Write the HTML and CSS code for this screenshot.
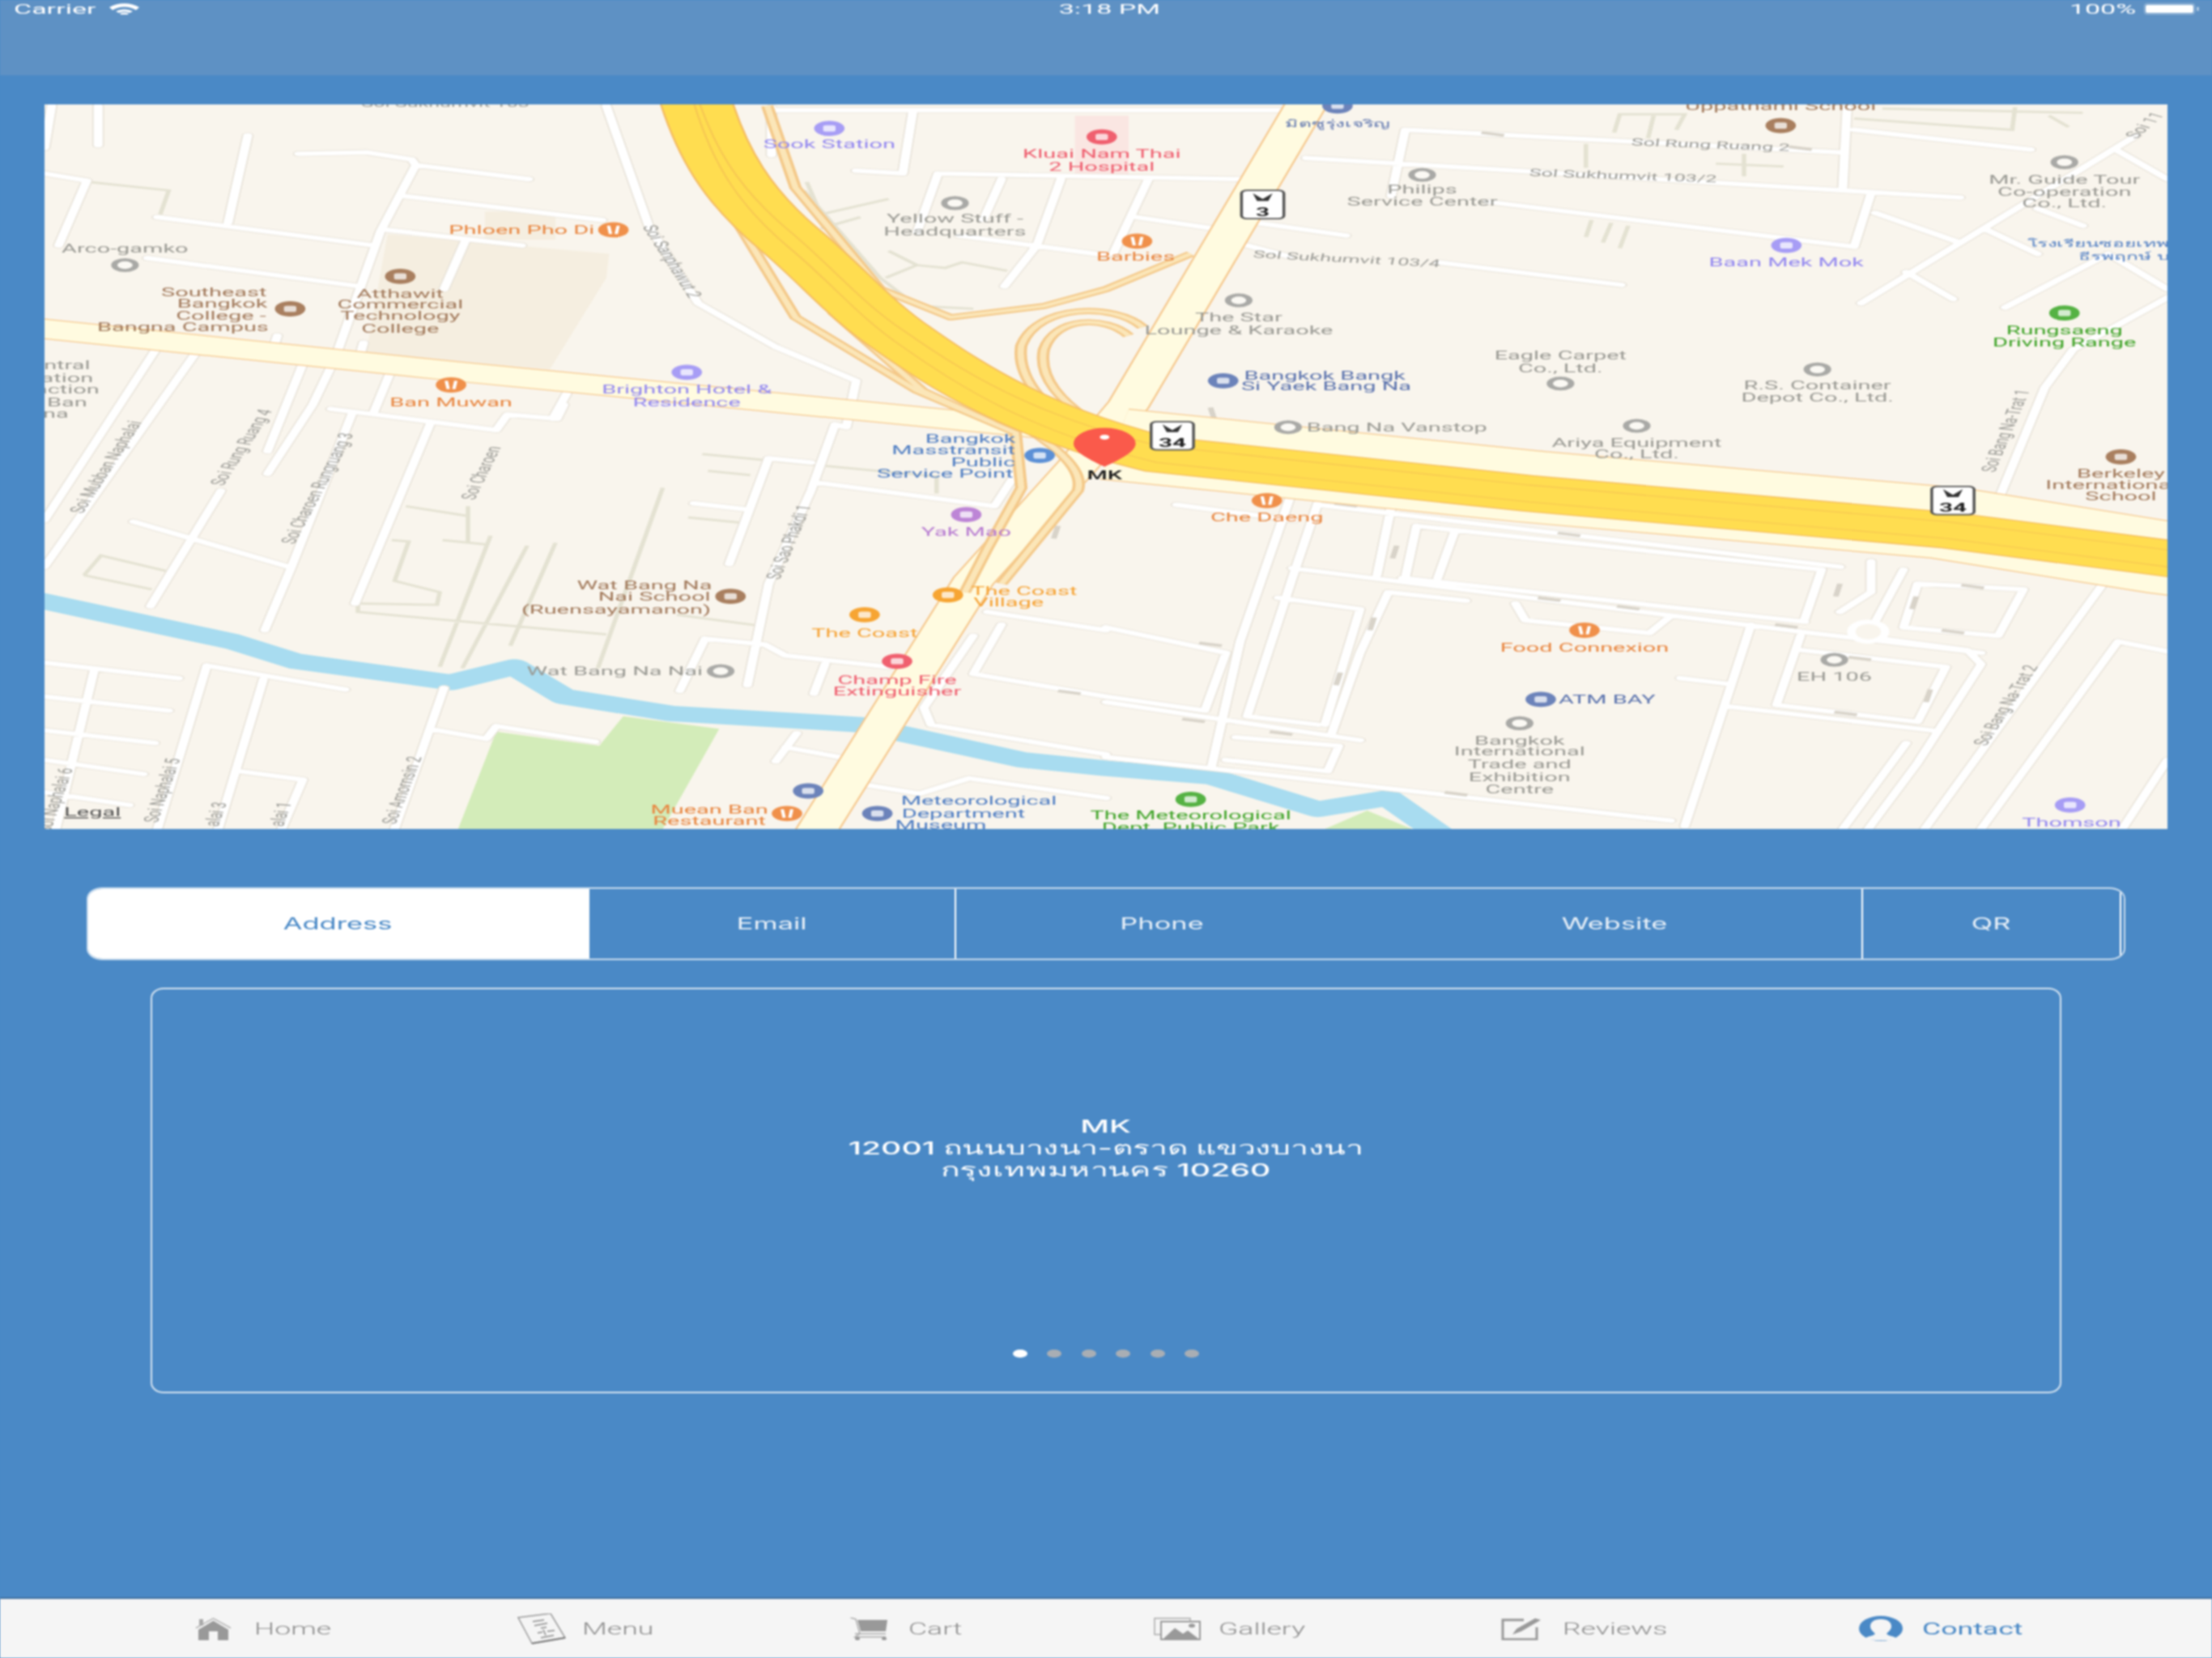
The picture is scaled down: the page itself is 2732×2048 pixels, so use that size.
FILE: index.html
```html
<!DOCTYPE html>
<html lang="en">
<head>
<meta charset="utf-8">
<title>Contact</title>
<link rel="stylesheet" href="styles.css">
</head>
<body>
<div class="screen">
  <header class="topbar">
    <div class="status-left">
      <span class="status-text origin-left">Carrier</span>
      <svg class="wifi" viewBox="0 0 37 14" preserveAspectRatio="none"><path d="M0 5C10-1.500 27-1.500 37 5L33 8.500C24 3 13 3 4 8.500Z" fill="#fff"/><path d="M8 10C14 6.500 23 6.500 29 10L25 12C21 10 16 10 12 12Z" fill="#fff"/><ellipse cx="18.500" cy="13" rx="5" ry="1.500" fill="#fff"/></svg>
    </div>
    <div class="status-center"><span class="status-text">3:18 PM</span></div>
    <div class="status-right">
      <span class="status-text origin-right">100%</span>
      <svg class="battery" viewBox="0 0 68 14" preserveAspectRatio="none"><rect x="0.500" y="0.500" width="62" height="13" rx="3" fill="none" stroke="#fff" stroke-opacity=".45"/><rect x="2" y="2" width="59" height="10" rx="2" fill="#fff"/><rect x="65" y="4.500" width="3" height="5" rx="1" fill="#fff" fill-opacity=".5"/></svg>
    </div>
  </header>

  <main class="content">
    <svg class="map" viewBox="16 74 752 514" preserveAspectRatio="none">
      <defs>
        <g id="fork"><circle r="5.400"/><path d="M-1.700-3L-1 3M1.700-3L1 3" stroke="#fff" stroke-width="1.200"/></g>
        <g id="glyph"><circle r="5.400"/><rect x="-2.200" y="-2.200" width="4.400" height="4.400" rx="1" fill="#fff" fill-opacity=".75"/></g>
        <g id="ring"><circle r="3.800" fill="#fbf9f4" stroke="#a9a9a6" stroke-width="2.200"/></g>
        <g id="shield"><rect x="-7.500" y="-10" width="15" height="20" rx="2" fill="#fff" stroke="#555" stroke-width="1"/><path d="M-3.500-8L0-4 3.500-8 2-2.500H-2Z" fill="#333"/></g>
        <path id="roads" d="M18.500 75L16 105M35 75V103M88 96L81 158M106 109L130 108L146 113L147.500 117L187.500 127M147.500 117L135 164L120 248L117.500 260L111 287L95 336M143.500 139L213.500 156M137.500 163L185 174M165 171L157.500 205M56 154L132.500 174M16 123L31 128L21 174M52.500 183L127.500 203M215 75L230 160L247.500 215L275 246L303.500 270L300 303L296 301L287.500 348L272.500 414L265 486M273.500 78H460M273.500 76V110M323.500 80L320 123L303.500 121M332.500 123L440.500 127M332.500 123L325 165M355 127L348.500 156M376 127L367.500 174L356 203M340 167L392 181M403 154L430 162M445.500 158L477 167M407 127L394.500 180M498 92L652 108M498 92L493 139M463 112L694.500 140M527 143L657 175L663 137M654.500 76L653 133M657 92L719.500 106M442 174L457 182M509.500 186L574.500 202M757 96L659.500 215M750.500 107L768 127M722 148L738 160M703 162L722 180M675.500 193L692 212M664.500 151L693 171M747 180L710.500 218M747 180L768 205M768 211L734.500 248L724.500 275L708 355M417 358L458.500 369M458 348L439.500 455L429.500 543M467 357L458 410L442 508L467 514M467 358L652 402M502 373L645.500 404L639.500 439M502 373L498 410M515.500 377L509.500 410M458 403L642 449L702 463M497 410L639.500 441M493.500 355L488 408M492 420L482 463L472 520M453 424L482 432L469.500 514M492 420L519.500 426M537 428L540.500 440L584.500 449L592 437M620.500 443L597 586M638 451L629.500 500L679.500 512L689.500 473L638 461M679.500 414L717 418L708 451L674.500 445ZM663 398L663 420L652 434M674.500 404L664.500 441M667 453L697 461L702 471L679.500 541L662 588M612 501L684.500 518M595.500 481L612 485M675.500 527L653 588M744.500 416L682 588M750.500 455L702 588M750.500 455L768 462M768 539L752 588M392 445L434.500 463L427 504L392 494M392 498L482 525M392 537L429.500 545L592 582M438 523L474.500 529L470.500 547L434.500 539M350 434L392 447M355 443L345 478L392 494M327.500 502L330 514L392 535M345 451L327.500 502M272.500 325L258.500 400M272.500 325L287.500 328M288.500 342L352.500 359L360 336M246 357L263.500 361M117.500 290L176 305L180 294L197.500 297L200 287M152.500 301L126 428M125 293L103.500 402L94 447M78.500 348L53.500 430M47.500 370L102.500 402M56 246L16 369M70 249L16 402M107.500 258L95 320M98.500 238L97.500 244M129 243L128 250M138.500 264L132.500 293M201 279L196 297M250 453L271 457L278.500 465L315 473M250 453L241 490M292.500 471L288.500 492M16 470L63.500 481M33.500 476L20 588M16 494L60 504M16 518L55 527M16 539L51 549M16 562L46 571M73.500 472L122.500 489M73.500 472L56 588M93.500 482L77.500 588M85 547L107.500 553L100 588M157.500 488L140 588M152.500 517L172.500 524L176 515L211 526M282.500 520L275 540M278.500 530L297.500 537M305 556L326 563L343.500 552L392 566"/>
        <path id="highway" d="M245 60C252 110 262 140 280 170C295 195 305 220 320 240C340 268 365 300 410 322L542 350L690 376L768 396L800 404"/>
        <path id="ramps" d="M272 75L282 133L312 205L337 225L370 217L392 205L422 180M257 143L282 225L325 277L360 307L362 346L350 389L342 420M295 221L327 277L352 300M350 287C370 310 385 330 382 348L355 414M405 232C395 215 368 215 362 245C360 270 372 290 382 305M400 238C392 224 374 224 370 248C368 268 376 285 388 300"/>
      </defs>

      <rect class="land" x="16" y="74" width="752" height="514"/>
      <path class="campus" d="M137.500 166L216 180L215 197L195 262L130 250Z"/>
      <rect class="campus" x="172" y="150" width="25" height="20"/>
      <rect class="hospital" x="381" y="82" width="19" height="43"/>
      <path class="park" d="M221 508L255 517L235 588H162.500L176 519L212.500 529Z"/>
      <path class="park" d="M469.500 588L484.500 575L500.500 588Z"/>
      <path class="water" d="M10 424L82.500 455L105 469L160 484L182.500 473L200 494L237.500 506L305 514L362.500 539L392 545L429.500 551L467 574L492 566L512 594"/>

      <path class="minor" d="M144 359L166 366M157 383L172 386M174 380L156 473M187 387L164 474M197 385L181 458M235 346L212 474M127 428L127 434L215 450M126 428L155 429L156 420L140 412L145 384L139 383M249 322L332 338L332 350M251 334L266 337M244 367L264 371M240 436L270 444M30 408L36 394L59 405M30 408L54 418M166 359V385M286 129L291 152L315 141M291 162L305 154M314 197L325 188L315 178M325 188L335 190L341 186L357 192M285 135L312 197L325 217L345 219M32 129L60 135L57 152M572 94L574 81L597 81L594 92M586 82L584 98M657 84L713 92L714 76M667 77L738 80M726 82L733 90M562 102V119M608 116L632 118M618 109V125M564 156L562 168M571 158L568 172M577 160L574 176"/>
      <use href="#roads" class="road-case"/>
      <use href="#roads" class="road-fill"/>
      <ellipse class="road-loop" cx="662" cy="448" rx="6" ry="7"/>
      <path class="arrow" d="M552 378l8 2M473 357l8 2M695 415l8 2M545 424l8 2M573 430l8 2M629 443l8 2M425 456l8 2M688 447l8 2M655 466l8 2M650 505l8 2M419 510l8 2M450 519l8 2M512 562l8 2M210 270l8 2M300 296l8 2M375 490l8 2M525 94l8 2M634 104l8 2M495 387l-1.500 9M652 414l-1.500 9M679 423l-1.500 9M487 438l-1.500 9M475 477l-1.500 9M684 489l-1.500 9M375 373l-1.500 9M429 289l1.500 9"/>

      <path class="art-edge w14" d="M10 232L160 263L375 305"/>
      <path class="art-fill w13" d="M10 232L160 263L375 305"/>
      <path class="art-edge w15" d="M467 60L400 287L382 330L345 412L288 594"/>
      <path class="art-fill w14n" d="M467 60L400 287L382 330L345 412L288 594"/>
      <path class="art-edge w51" d="M395 315L542 345L690 371L768 396L800 404"/>
      <path class="art-fill w50" d="M395 315L542 345L690 371L768 396L800 404"/>
      <use href="#ramps" class="ramp-edge"/>
      <use href="#ramps" class="ramp-fill"/>
      <use href="#highway" class="hw-edge"/>
      <use href="#highway" class="hw-fill"/>
      <use href="#highway" class="hw-line" y="-6"/>
      <use href="#highway" class="hw-line" y="6"/>

      <g class="streets">
        <text x="158" y="76">Sol Sukhumvit 103</text>
        <text transform="translate(236 186) rotate(72)">Soi Sanphawut 2</text>
        <text transform="translate(606 105) rotate(4)">Sol Rung Ruang 2</text>
        <text transform="translate(575 127) rotate(4)">Sol Sukhumvit 103/2</text>
        <text transform="translate(477 186) rotate(6)">Sol Sukhumvit 103/4</text>
        <text transform="translate(40 332) rotate(-72)">Soi Mubban Naphalai</text>
        <text transform="translate(88 318) rotate(-72)">Soi Rung Ruang 4</text>
        <text transform="translate(115 347) rotate(-75)">Soi Charoen Rungruang 3</text>
        <text transform="translate(173 336) rotate(-76)">Soi Charoen</text>
        <text transform="translate(282 385) rotate(-78)">Soi Sao Phakdi 1</text>
        <text transform="translate(22 568) rotate(-80)">Soi Naphalai 6</text>
        <text transform="translate(60 561) rotate(-80)">Soi Naphalai 5</text>
        <text transform="translate(79 578) rotate(-80)">alai 3</text>
        <text transform="translate(102 578) rotate(-80)">alai 1</text>
        <text transform="translate(145 561) rotate(-79)">Soi Amornsin 2</text>
        <text transform="translate(713 306) rotate(-78)">Soi Bang Na-Trat 1</text>
        <text transform="translate(713 501) rotate(-72)">Soi Bang Na-Trat 2</text>
        <text transform="translate(762 90) rotate(-60)">Soi 11</text>
      </g>

      <use href="#glyph" x="294" y="91" class="c-purple"/>
      <use href="#glyph" x="390.500" y="97" class="c-red"/>
      <use href="#glyph" x="474" y="75" class="c-navy"/>
      <use href="#glyph" x="631" y="89" class="c-brown"/>
      <use href="#ring" x="504" y="124"/>
      <use href="#ring" x="731.500" y="115"/>
      <use href="#ring" x="338.500" y="144"/>
      <use href="#fork" x="217.500" y="163" class="c-orange"/>
      <use href="#fork" x="403" y="171" class="c-orange"/>
      <use href="#glyph" x="633" y="174" class="c-purple"/>
      <use href="#ring" x="44.500" y="188"/>
      <use href="#glyph" x="103" y="219" class="c-brown"/>
      <use href="#glyph" x="142" y="196" class="c-brown"/>
      <use href="#ring" x="439" y="213"/>
      <use href="#glyph" x="731.500" y="222" class="c-green"/>
      <use href="#ring" x="553" y="272"/>
      <use href="#glyph" x="433.500" y="270" class="c-navy"/>
      <use href="#ring" x="644" y="262"/>
      <use href="#glyph" x="243.500" y="264" class="c-purple"/>
      <use href="#fork" x="160" y="273" class="c-orange"/>
      <use href="#ring" x="456.500" y="303"/>
      <use href="#ring" x="580" y="302"/>
      <use href="#glyph" x="368.500" y="323" class="c-blue"/>
      <use href="#glyph" x="751.500" y="324" class="c-brown"/>
      <use href="#fork" x="449" y="355" class="c-orange"/>
      <use href="#glyph" x="342.500" y="365" class="c-lilac"/>
      <use href="#glyph" x="336" y="422" class="c-amber"/>
      <use href="#glyph" x="259" y="423" class="c-brown"/>
      <use href="#glyph" x="306.500" y="436" class="c-amber"/>
      <use href="#fork" x="561.500" y="447" class="c-orange"/>
      <use href="#ring" x="255.500" y="476"/>
      <use href="#glyph" x="318" y="469" class="c-red"/>
      <use href="#ring" x="650" y="468"/>
      <use href="#glyph" x="546" y="496" class="c-navy"/>
      <use href="#ring" x="538.500" y="513"/>
      <use href="#glyph" x="311" y="577" class="c-navy"/>
      <use href="#fork" x="279" y="577" class="c-orange"/>
      <use href="#glyph" x="286.500" y="561" class="c-navy"/>
      <use href="#glyph" x="422" y="567" class="c-green"/>
      <use href="#glyph" x="733.500" y="571" class="c-purple"/>

      <g class="labels">
        <text class="t-purple" x="294" y="105">Sook Station</text>
        <text class="t-red" x="390.500" y="112">Kluai Nam Thai</text>
        <text class="t-red" x="390.500" y="121">2 Hospital</text>
        <text class="t-navy t-thai" x="474" y="90">มิตซูรุ่งเจริญ</text>
        <text class="t-brown" x="631" y="78">Uppathami School</text>
        <text class="t-gray" x="504" y="137">Philips</text>
        <text class="t-gray" x="504" y="146">Service Center</text>
        <text class="t-gray" x="731.500" y="130">Mr. Guide Tour</text>
        <text class="t-gray" x="731.500" y="139">Co-operation</text>
        <text class="t-gray" x="731.500" y="147">Co., Ltd.</text>
        <text class="t-gray" x="338.500" y="158">Yellow Stuff -</text>
        <text class="t-gray" x="338.500" y="167">Headquarters</text>
        <text class="t-orange" x="185" y="166">Phloen Pho Di</text>
        <text class="t-orange" x="402.500" y="185">Barbies</text>
        <text class="t-purple" x="633" y="189">Baan Mek Mok</text>
        <text class="t-blue t-thai" x="743.500" y="175">โรงเรียนซอยเทพ</text>
        <text class="t-blue t-thai" x="752.500" y="184">ธีรพฤกษ์ บ</text>
        <text class="t-gray" x="44.500" y="179">Arco-gamko</text>
        <text class="t-brown" x="76" y="210">Southeast</text>
        <text class="t-brown" x="79" y="218">Bangkok</text>
        <text class="t-brown" x="78.500" y="227">College -</text>
        <text class="t-brown" x="65" y="235">Bangna Campus</text>
        <text class="t-brown" x="142" y="211">Atthawit</text>
        <text class="t-brown" x="142" y="219">Commercial</text>
        <text class="t-brown" x="142" y="227">Technology</text>
        <text class="t-brown" x="142" y="236">College</text>
        <text class="t-gray" x="439" y="228">The Star</text>
        <text class="t-gray" x="439" y="237">Lounge &amp; Karaoke</text>
        <text class="t-green" x="731.500" y="237">Rungsaeng</text>
        <text class="t-green" x="731.500" y="246">Driving Range</text>
        <text class="t-gray" x="553" y="255">Eagle Carpet</text>
        <text class="t-gray" x="553" y="264">Co., Ltd.</text>
        <text class="t-navy" x="469.500" y="269">Bangkok Bangk</text>
        <text class="t-navy" x="470" y="277">Si Yaek Bang Na</text>
        <text class="t-gray" x="644" y="276">R.S. Container</text>
        <text class="t-gray" x="644" y="285">Depot Co., Ltd.</text>
        <text class="t-purple" x="243.500" y="279">Brighton Hotel &amp;</text>
        <text class="t-purple" x="243.500" y="288">Residence</text>
        <text class="t-orange" x="160" y="288">Ban Muwan</text>
        <text class="t-gray" x="24" y="262">ntral</text>
        <text class="t-gray" x="24" y="271">ation</text>
        <text class="t-gray" x="24" y="279">action</text>
        <text class="t-gray" x="24" y="288">Ban</text>
        <text class="t-gray" x="20" y="296">na</text>
        <text class="t-gray" x="495" y="306">Bang Na Vanstop</text>
        <text class="t-gray" x="580" y="317">Ariya Equipment</text>
        <text class="t-gray" x="580" y="325">Co., Ltd.</text>
        <text class="t-blue" x="344" y="314">Bangkok</text>
        <text class="t-blue" x="338" y="322">Masstransit</text>
        <text class="t-blue" x="348.500" y="331">Public</text>
        <text class="t-blue" x="335" y="339">Service Point</text>
        <text class="t-mk" x="391.500" y="340">MK</text>
        <text class="t-brown" x="751.500" y="339">Berkeley</text>
        <text class="t-brown" x="748" y="347">International</text>
        <text class="t-brown" x="751.500" y="355">School</text>
        <text class="t-orange" x="449" y="370">Che Daeng</text>
        <text class="t-lilac" x="342.500" y="380">Yak Mao</text>
        <text class="t-amber" x="363" y="422">The Coast</text>
        <text class="t-amber" x="357.500" y="430">Village</text>
        <text class="t-brown" x="228.500" y="418">Wat Bang Na</text>
        <text class="t-brown" x="232" y="426">Nai School</text>
        <text class="t-brown" x="218.500" y="435">(Ruensayamanon)</text>
        <text class="t-amber" x="306.500" y="452">The Coast</text>
        <text class="t-orange" x="561.500" y="462">Food Connexion</text>
        <text class="t-gray" x="218" y="479">Wat Bang Na Nai</text>
        <text class="t-red" x="318" y="485">Champ Fire</text>
        <text class="t-red" x="318" y="493">Extinguisher</text>
        <text class="t-gray" x="650" y="483">EH 106</text>
        <text class="t-navy" x="569.500" y="499">ATM BAY</text>
        <text class="t-gray" x="538.500" y="528">Bangkok</text>
        <text class="t-gray" x="538.500" y="536">International</text>
        <text class="t-gray" x="538.500" y="545">Trade and</text>
        <text class="t-gray" x="538.500" y="554">Exhibition</text>
        <text class="t-gray" x="538.500" y="563">Centre</text>
        <text class="t-blue" x="347" y="571">Meteorological</text>
        <text class="t-blue" x="341.500" y="580">Department</text>
        <text class="t-blue" x="333.500" y="588">Museum</text>
        <text class="t-orange" x="251.500" y="577">Muean Ban</text>
        <text class="t-orange" x="251.500" y="585">Restaurant</text>
        <text class="t-green" x="422" y="581">The Meteorological</text>
        <text class="t-green" x="422" y="590">Dept. Public Park</text>
        <text class="t-purple" x="734" y="586">Thomson</text>
        <text class="t-legal" x="33" y="579">Legal</text>
      </g>

      <path class="pin" d="M391.500 331C385 325 380.500 320 380.500 314.500A11 11 0 0 1 402.500 314.500C402.500 320 398 325 391.500 331Z"/>
      <circle class="pin-dot" cx="391.500" cy="310" r="1.700"/>
      <use href="#shield" x="447.500" y="145"/>
      <text class="shield-num" x="447.500" y="153">3</text>
      <use href="#shield" x="415.500" y="309"/>
      <text class="shield-num" x="415.500" y="317">34</text>
      <use href="#shield" x="692" y="355"/>
      <text class="shield-num" x="692" y="363">34</text>
    </svg>

    <nav class="segments">
      <div class="segment is-active"><span class="seg-label">Address</span></div>
      <div class="segment has-rule"><span class="seg-label">Email</span></div>
      <div class="segment has-rule"><span class="seg-label">Phone</span></div>
      <div class="segment"><span class="seg-label">Website</span></div>
      <div class="segment has-rule"><span class="seg-label">QR</span></div>
      <div class="segment has-rule"></div>
    </nav>

    <section class="card">
      <div class="address">
        <div>MK</div>
        <div>12001 ถนนบางนา-ตราด แขวงบางนา</div>
        <div>กรุงเทพมหานคร 10260</div>
      </div>
      <div class="dots">
        <span class="dot is-on"></span><span class="dot"></span><span class="dot"></span><span class="dot"></span><span class="dot"></span><span class="dot"></span>
      </div>
    </section>
  </main>

  <footer class="tabbar">
    <div class="tab">
      <svg class="ic ic-home" viewBox="0 0 47 28" preserveAspectRatio="none"><path d="M2 13L23.500 1 45 13" fill="none" stroke="#b5b5b5" stroke-width="1.500"/><path d="M5 15L23.500 4 42 15V28H29V17H18V28H5Z" fill="#999"/><rect x="6" y="2" width="5" height="8" fill="#aaa"/></svg>
      <span class="tab-label">Home</span>
    </div>
    <div class="tab">
      <svg class="ic ic-menu" viewBox="0 0 61 38" preserveAspectRatio="none"><path d="M2 5L42 0 60 30 19 37Z" fill="#f5f5f5" stroke="#999" stroke-width="1.500"/><path d="M20 10L34 8M22 15L38 12M30 18L37 17M33 20L36 27M26 24L32 23M30 30L46 27M38 22L47 21" stroke="#8a8a8a" stroke-width="1.500" fill="none"/><path d="M19 37L60 30" stroke="#777" stroke-width="2"/></svg>
      <span class="tab-label">Menu</span>
    </div>
    <div class="tab">
      <svg class="ic ic-cart" viewBox="0 0 46 28" preserveAspectRatio="none"><path d="M9 3L46 3 44 17H13Z" fill="#999"/><path d="M0 0L7 2 12 20 6 24H44" fill="none" stroke="#aaa" stroke-width="1.500"/><path d="M6 20H44" stroke="#aaa" stroke-width="1.500"/><ellipse cx="9" cy="26" rx="3" ry="2" fill="#999"/><ellipse cx="42" cy="26" rx="3" ry="2" fill="#999"/></svg>
      <span class="tab-label">Cart</span>
    </div>
    <div class="tab">
      <svg class="ic ic-gallery" viewBox="0 0 58 28" preserveAspectRatio="none"><rect x="1" y="1" width="44" height="20" fill="none" stroke="#aaa" stroke-width="1.500"/><rect x="9" y="5" width="48" height="22" fill="#f5f5f5" stroke="#999" stroke-width="2"/><path d="M12 26L26 13 36 20 42 16 55 26Z" fill="#999"/><ellipse cx="47" cy="10" rx="4" ry="2.500" fill="#999"/></svg>
      <span class="tab-label">Gallery</span>
    </div>
    <div class="tab">
      <svg class="ic ic-reviews" viewBox="0 0 50 28" preserveAspectRatio="none"><path d="M28 3H2V27H44V12" fill="none" stroke="#999" stroke-width="3"/><path d="M14 21L19 14 42 1 49 3 25 17Z" fill="#999"/></svg>
      <span class="tab-label">Reviews</span>
    </div>
    <div class="tab is-current">
      <svg class="ic ic-contact" viewBox="0 0 54 31" preserveAspectRatio="none"><ellipse cx="27" cy="15.500" rx="27" ry="15.500" fill="#4a89c6"/><path d="M27 4C18 4 14 8 14 13C14 17 18 20 20 22C18 25 10 25 7 28C13 31 41 31 47 28C44 25 36 25 34 22C36 20 40 17 40 13C40 8 36 4 27 4Z" fill="#f5f5f5"/></svg>
      <span class="tab-label">Contact</span>
    </div>
  </footer>
</div>
</body>
</html>
```

FILE: styles.css
```css
* { box-sizing: border-box; }
html, body { margin: 0; padding: 0; overflow: hidden; }
body { width: 2732px; height: 2048px; background: #4a89c6; font-family: Inter, "Noto Sans", "DejaVu Sans", sans-serif; }

.screen { width: 2732px; height: 2048px; display: flex; flex-direction: column; background: #4a89c6; filter: blur(0.8px); }

/* status + nav bar */
.topbar { flex: 0 0 93px; background: #5e91c4; display: grid; grid-template-columns: 1fr auto 1fr; align-items: start; padding: 2px 16px 0 17px; color: #fff; }
.status-left { display: flex; align-items: center; height: 18px; }
.status-center { display: flex; align-items: center; height: 18px; margin-left: 8px; }
.status-right { display: flex; align-items: center; justify-content: flex-end; height: 18px; gap: 10px; }
.status-text { display: inline-block; font-family: Roboto, sans-serif; font-size: 17px; line-height: 18px; transform: scaleX(2); white-space: nowrap; }
.origin-left { transform-origin: left center; width: 118px; }
.origin-right { transform-origin: right center; }
.wifi { width: 37px; height: 14px; }
.battery { width: 68px; height: 14px; }

/* content column */
.content { flex: 1 1 auto; display: flex; flex-direction: column; padding-top: 36px; }

.map { display: block; width: 2622px; height: 895px; margin-left: 55px; flex: none; }
.land { fill: #f9f5ed; }
.campus { fill: #f5eee0; }
.hospital { fill: #fae6e2; }
.park { fill: #d3ecb9; }
.water { fill: none; stroke: #a8dcf0; stroke-width: 11; stroke-linejoin: round; }
.minor { fill: none; stroke: #e4e2d2; stroke-width: 1.6; }
.road-case { fill: none; stroke: #e8e3d9; stroke-width: 4.2; stroke-linecap: round; stroke-linejoin: round; }
.road-fill { fill: none; stroke: #fff; stroke-width: 3.2; stroke-linecap: round; stroke-linejoin: round; }
.road-loop { fill: #f9f5ed; stroke: #fff; stroke-width: 3; }
.arrow { fill: none; stroke: #d8d3c9; stroke-width: 2; }
.art-edge { fill: none; stroke: #f6c78c; }
.art-fill { fill: none; stroke: #fffbe0; }
.w13 { stroke-width: 13; } .w14 { stroke-width: 14.4; }
.w14n { stroke-width: 14; } .w15 { stroke-width: 15.4; }
.w50 { stroke-width: 50; } .w51 { stroke-width: 51.4; }
.ramp-edge { fill: none; stroke: #f4c98a; stroke-width: 4.4; stroke-linejoin: round; }
.ramp-fill { fill: none; stroke: #fbe6b8; stroke-width: 2.2; stroke-linejoin: round; }
.hw-edge { fill: none; stroke: #f5bd62; stroke-width: 26; }
.hw-fill { fill: none; stroke: #ffdd50; stroke-width: 24.5; }
.hw-line { fill: none; stroke: #f6c552; stroke-width: .6; }

.c-purple { fill: #a79df5; } .c-red { fill: #f0606f; } .c-navy { fill: #6c83ba; }
.c-brown { fill: #a97f5f; } .c-orange { fill: #f0904a; } .c-green { fill: #55b243; }
.c-blue { fill: #5c90d6; } .c-lilac { fill: #bd85d6; } .c-amber { fill: #f7a533; }

.labels text, .streets text, .shield-num { font-family: Roboto, "Noto Sans", "DejaVu Sans", sans-serif; }
.labels text { font-size: 8.3px; text-anchor: middle; }
.labels .t-thai { font-size: 7px; }
.streets text { font-size: 7.2px; fill: #9b9b96; text-anchor: middle; }
.t-gray { fill: #9a9a94; } .t-brown { fill: #a27a5c; } .t-orange { fill: #e8853f; }
.t-amber { fill: #f6a233; } .t-purple { fill: #9287f0; } .t-blue { fill: #4d7cc2; }
.t-navy { fill: #5a72ad; } .t-red { fill: #ef5d6e; } .t-green { fill: #3ea327; }
.t-lilac { fill: #b77bd1; } .t-mk { fill: #1c1c1c; font-weight: 500; }
.t-legal { fill: #555; text-decoration: underline; }
.pin { fill: #fa5a4b; }
.pin-dot { fill: #fff; }
.shield-num { font-size: 8.5px; font-weight: 700; fill: #222; text-anchor: middle; }

/* segmented control */
.segments { margin: 72px 0 0 107px; width: 2518px; height: 90px; display: grid; grid-template-columns: 617px 453px 511px 609px 319px 1fr; border: 2px solid #c9dcee; border-radius: 20px / 14px; flex: none; overflow: hidden; }
.segment { display: flex; align-items: center; justify-content: center; }
.segment.is-active { background: #fff; }
.segment.has-rule { border-left: 2px solid #fff; }
.seg-label { display: inline-block; font-size: 20px; line-height: 26px; color: #e8f0f8; transform: scaleX(1.72); white-space: nowrap; }
.is-active .seg-label { color: #4a89c6; }

/* address card */
.card { margin: 34px 0 0 186px; width: 2360px; height: 501px; border: 2px solid #d6e4f1; border-radius: 16px / 13px; padding-top: 156px; display: flex; flex-direction: column; align-items: center; flex: none; }
.address { color: #fff; font-size: 22px; font-weight: 500; line-height: 27px; text-align: center; white-space: nowrap; transform: scaleX(1.78); }
.dots { margin-top: auto; margin-bottom: 42px; display: flex; gap: 24.6px; }
.dot { width: 18px; height: 10px; border-radius: 50%; background: #a9aeb4; }
.dot.is-on { background: #fff; }

/* tab bar */
.tabbar { flex: 0 0 75px; background: #f5f5f5; border-top: 2px solid #3d6f9f; display: grid; grid-template-columns: 398px 412px 375px 429px 442px 1fr; align-items: center; padding-left: 240px; }
.tab { display: flex; align-items: center; }
.ic { flex: none; }
.tab-label { display: inline-block; font-family: Roboto, sans-serif; font-size: 20px; font-weight: 300; color: #8e8e8e; transform: scaleX(1.78); transform-origin: left center; white-space: nowrap; }
.is-current .tab-label { color: #4a89c6; font-weight: 400; }
.ic-home { width: 47px; height: 28px; margin-right: 27px; }
.ic-menu { width: 61px; height: 38px; margin-right: 20px; }
.ic-cart { width: 46px; height: 28px; margin-right: 26px; }
.ic-gallery { width: 58px; height: 28px; margin-right: 22px; }
.ic-reviews { width: 50px; height: 28px; margin-right: 26px; }
.ic-contact { width: 54px; height: 31px; margin-right: 24px; }
```
